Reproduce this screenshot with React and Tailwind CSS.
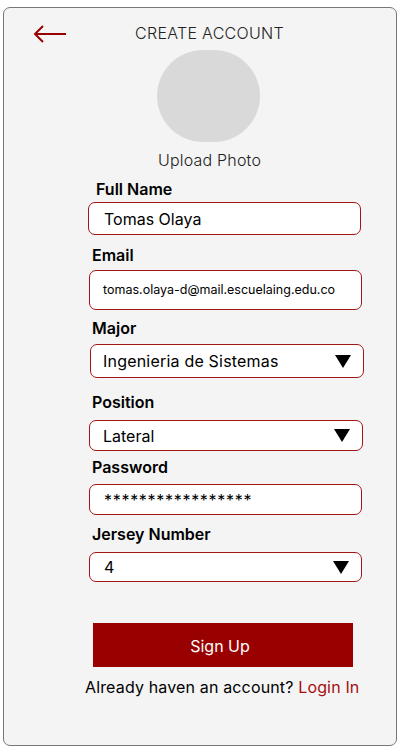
const RED = '#990000'

function Caret() {
  return (
    <svg width="16" height="13" viewBox="0 0 16 13" className="shrink-0">
      <path d="M0 0 H16 L8 13 Z" fill="#000" />
    </svg>
  )
}

function Label({ children, className = '' }) {
  return (
    <div className={`text-[16px] leading-5 font-semibold text-black ${className}`}>{children}</div>
  )
}

function Field({ children, className = '', select }) {
  return (
    <div className={`flex items-center justify-between bg-white border border-[#a31515] rounded-[7px] ${className}`}>
      {children}
      {select && <div className="pr-[12px]"><Caret /></div>}
    </div>
  )
}

export default function App() {
  return (
    <div className="w-[397px] h-[748px] bg-white pt-[7px] pl-[3px]" style={{ fontFamily: 'Inter, "Liberation Sans", sans-serif' }}>
      <div className="w-[394px] h-[739px] border border-[#777] rounded-[7px] bg-[#f4f4f4] flex flex-col">
        <div className="relative mt-[13px] h-6 flex items-center justify-center">
          <svg width="34" height="20" viewBox="0 0 34 20" className="absolute left-[29px] top-[4px]">
            <path d="M33 9 H2 M10 1 L2 9 L10 17" fill="none" stroke={RED} strokeWidth="2" />
          </svg>
          <span className="text-[16px] leading-6 font-light text-[#222] tracking-[0.3px] ml-[19px]">CREATE ACCOUNT</span>
        </div>
        <div className="mt-[5px] ml-[153px] w-[103px] h-[92px] rounded-full bg-[#d9d9d9]" />
        <div className="mt-[6px] text-center text-[16px] leading-6 font-light text-[#222] tracking-[0.2px] ml-[19px]">Upload Photo</div>

        <div className="ml-[84px] w-[274px] flex flex-col">
          <Label className="mt-[7px] ml-[8px]">Full Name</Label>
          <Field className="mt-[3px] h-[33px] w-[273px]">
            <span className="pl-[15px] text-[16px] text-black">Tomas Olaya</span>
          </Field>

          <Label className="mt-[10px] ml-[4px]">Email</Label>
          <Field className="mt-[5px] h-[40px] w-[273px] ml-[1px]">
            <span className="pl-[13px] text-[12.5px] text-black">tomas.olaya-d@mail.escuelaing.edu.co</span>
          </Field>

          <Label className="mt-[8px] ml-[4px]">Major</Label>
          <Field select className="mt-[6px] h-[34px] w-[274px] ml-[2px]">
            <span className="pl-[12px] text-[16px] text-black tracking-[0.2px]">Ingenieria de Sistemas</span>
          </Field>

          <Label className="mt-[14px] ml-[4px]">Position</Label>
          <Field select className="mt-[8px] h-[31px] w-[274px] ml-[1px]">
            <span className="pl-[13px] text-[16px] text-black">Lateral</span>
          </Field>

          <Label className="mt-[6px] ml-[4px]">Password</Label>
          <Field className="mt-[7px] h-[31px] w-[273px] ml-[1px]">
            <span className="pl-[14px] text-[16px] text-black tracking-[0.7px]">*****************</span>
          </Field>

          <Label className="mt-[9px] ml-[4px]">Jersey Number</Label>
          <Field select className="mt-[8px] h-[30px] w-[273px] ml-[1px]">
            <span className="pl-[14px] text-[16px] text-black">4</span>
          </Field>

          <button className="mt-[41px] ml-[5px] w-[260px] h-[44px] bg-[#990000] text-white text-[16px] pr-[6px] pt-[2px]">Sign Up</button>
          <div className="mt-[10px] self-start ml-[-3px] text-[16px] leading-5 text-black whitespace-nowrap tracking-[0.15px]">
            Already haven an account? <span className="text-[#a50e0e]">Login In</span>
          </div>
        </div>
      </div>
    </div>
  )
}
